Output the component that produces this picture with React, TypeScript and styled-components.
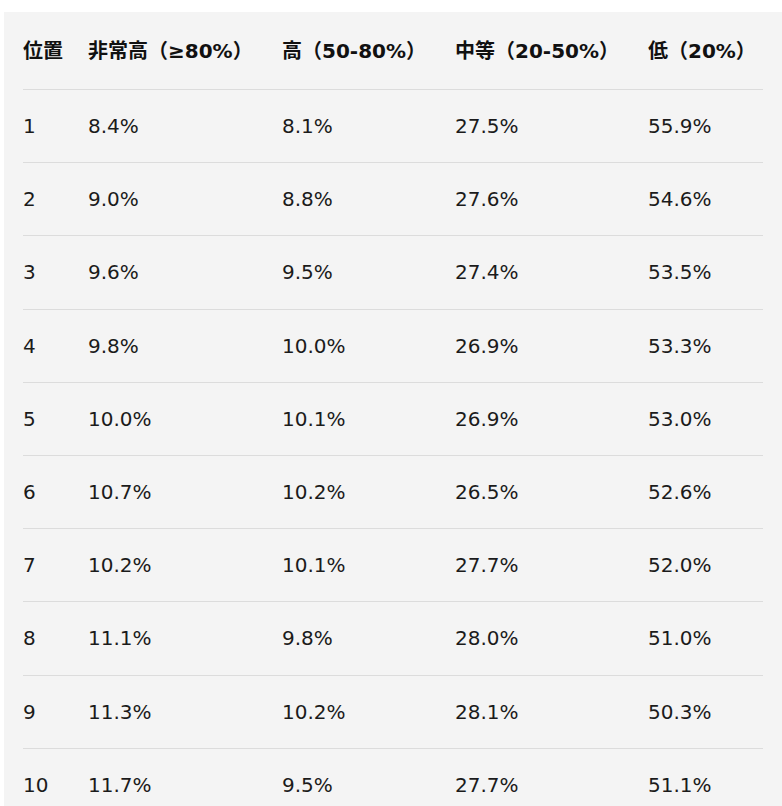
import React from "react";
import styled, { createGlobalStyle } from "styled-components";

const Global = createGlobalStyle`
  html, body { margin: 0; padding: 0; background: #ffffff; }
  body { font-family: "DejaVu Sans", "Noto Sans CJK JP", sans-serif; color: #1b1b1b; }
`;

const Page = styled.div`
  padding: 12px 0 0 4px;
`;

const Panel = styled.div`
  background: #f4f4f4;
  padding: 0 19px;
  width: 740px;
`;

const Table = styled.table`
  border-collapse: collapse;
  width: 740px;
  table-layout: fixed;
`;

const Th = styled.th<{ $w: number }>`
  width: ${(p) => p.$w}px;
  text-align: left;
  font-family: "DejaVu Sans", "Noto Sans CJK JP", sans-serif;
  font-weight: 700;
  font-size: 20px;
  line-height: 28px;
  height: 77px;
  padding: 0;
  vertical-align: middle;
  border-bottom: 1px solid #dcdcdc;
  white-space: nowrap;
  color: #111;
`;

const Td = styled.td`
  font-size: 20px;
  line-height: 28px;
  height: 72.2px;
  padding: 0;
  vertical-align: middle;
  border-bottom: 1px solid #dcdcdc;
  color: #1b1b1b;
`;

const Row = styled.tr`
  &:last-child td { border-bottom: none; }
`;

const headers: [string, number][] = [
  ["位置", 65],
  ["非常高（≥80%）", 194],
  ["高（50-80%）", 173],
  ["中等（20-50%）", 193],
  ["低（20%）", 115],
];

const rows = [
  ["1", "8.4%", "8.1%", "27.5%", "55.9%"],
  ["2", "9.0%", "8.8%", "27.6%", "54.6%"],
  ["3", "9.6%", "9.5%", "27.4%", "53.5%"],
  ["4", "9.8%", "10.0%", "26.9%", "53.3%"],
  ["5", "10.0%", "10.1%", "26.9%", "53.0%"],
  ["6", "10.7%", "10.2%", "26.5%", "52.6%"],
  ["7", "10.2%", "10.1%", "27.7%", "52.0%"],
  ["8", "11.1%", "9.8%", "28.0%", "51.0%"],
  ["9", "11.3%", "10.2%", "28.1%", "50.3%"],
  ["10", "11.7%", "9.5%", "27.7%", "51.1%"],
];

export default function App() {
  return (
    <>
      <Global />
      <Page>
        <Panel>
          <Table>
            <thead>
              <tr>
                {headers.map(([h, w]) => (
                  <Th key={h} $w={w}>{h}</Th>
                ))}
              </tr>
            </thead>
            <tbody>
              {rows.map((r) => (
                <Row key={r[0]}>
                  {r.map((c, i) => (
                    <Td key={i}>{c}</Td>
                  ))}
                </Row>
              ))}
            </tbody>
          </Table>
        </Panel>
      </Page>
    </>
  );
}
